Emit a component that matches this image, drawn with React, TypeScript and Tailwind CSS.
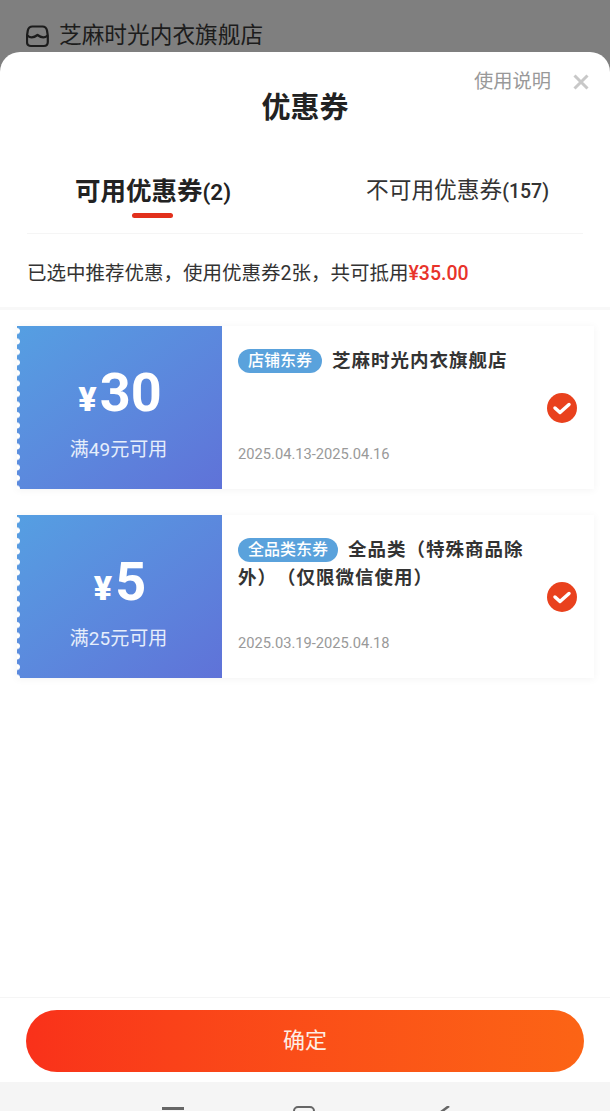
const font = "font-['Roboto','Noto_Sans_CJK_SC',sans-serif]"

function StoreIcon() {
  return (
    <svg width="23" height="23" viewBox="0 0 23 23" fill="none" stroke="#1c1c1c" strokeWidth="2.2" className="shrink-0">
      <path d="M6.500 1.500h10c2.500 0 4 1.700 4.500 4l.8 5v6.500c0 2.500-1.800 4-4 4H5c-2.200 0-4-1.500-4-4v-6.500l.8-5c.5-2.300 2-4 4.700-4z" />
      <path d="M1.500 10.500c2.500 2.500 6 2.500 10-.5 4 3 7.500 3 10 .5" />
    </svg>
  )
}

function CheckBadge() {
  return (
    <svg width="30" height="30" viewBox="0 0 30 30" className="shrink-0">
      <circle cx="15" cy="15" r="15" fill="#e9411d" />
      <path d="M8 15l5 4.500 9-8" fill="none" stroke="#fff" strokeWidth="3.500" strokeLinecap="round" strokeLinejoin="round" />
    </svg>
  )
}

interface CouponProps {
  amount: string
  limit: string
  tag: string
  title: string
  dates: string
}

function Coupon({ amount, limit, tag, title, dates }: CouponProps) {
  return (
    <div className="flex h-[163px] bg-white shadow-[0_1px_8px_rgba(0,0,0,0.05)]">
      <div className="relative flex w-[205px] shrink-0 flex-col items-center bg-gradient-to-br from-[#559fe2] to-[#5f72d8] text-white">
        <div className="absolute inset-y-0 left-0 w-[3px] bg-[radial-gradient(circle_at_0_5px,#ffffff_2.500px,transparent_3.500px)] bg-[length:3px_10.500px]" />
        <div className="flex h-[99px] items-end justify-center pb-[5px] pl-[1px]">
          <span className="mr-[3px] mb-[4px] text-[34px] leading-none font-black">¥</span>
          <span className="text-[54px] leading-none font-bold">{amount}</span>
        </div>
        <div className="mt-[12px] pr-[2px] text-[19px] leading-[26px] text-[#e6eefb]">{limit}</div>
      </div>
      <div className="flex min-w-0 flex-1 items-center pr-[17px] pl-[16px]">
        <div className="flex h-full min-w-0 flex-1 flex-col pt-[21px] pb-[25px]">
          <div className="text-[18.500px] leading-[28px] font-semibold tracking-[1px] text-[#333] [text-spacing-trim:space-all]">
            <span className="mr-[10px] inline-flex h-[24px] items-center rounded-full bg-[#5aa2dc] px-[10px] align-[1px] text-[16px] font-medium tracking-normal text-white">
              {tag}
            </span>
            {title}
          </div>
          <div className="mt-auto text-[14.700px] leading-[20px] text-[#999]">{dates}</div>
        </div>
        <CheckBadge />
      </div>
    </div>
  )
}

export default function App() {
  return (
    <div className={`${font} flex h-[1111px] w-[610px] flex-col overflow-hidden bg-[#7f7f7f]`}>
      <div className="flex h-[52px] shrink-0 items-end gap-[10px] pb-[4px] pl-[26px] text-[22.700px] leading-[32px] text-[#1c1c1c]">
        <StoreIcon />
        <span className="mb-[-4px]">芝麻时光内衣旗舰店</span>
      </div>

      <div className="flex min-h-0 flex-1 flex-col rounded-t-[20px] bg-white">
        <div className="relative h-[92px] shrink-0 pt-[38px] text-center text-[29px] leading-[36px] font-semibold text-[#222]">
          优惠券
          <div className="absolute top-[17px] right-[21px] flex items-center gap-[22px]">
            <span className="text-[19.300px] leading-[26px] font-normal text-[#999]">使用说明</span>
            <svg width="16" height="16" viewBox="0 0 16 16" stroke="#c8c8c8" strokeWidth="3" className="shrink-0">
              <path d="M1.500 1.500l13 13M14.500 1.500l-13 13" />
            </svg>
          </div>
        </div>

        <div className="mx-[27px] flex h-[90px] shrink-0 items-start border-b border-[#f5f5f5]">
          <div className="relative mt-[29px] ml-[48px] text-[25.500px] leading-[36px] font-semibold text-[#222]">
            可用优惠券<span className="text-[22.500px]">(2)</span>
            <div className="absolute top-[40px] left-[57px] h-[5px] w-[41px] rounded-full bg-[#e2301c]" />
          </div>
          <div className="mt-[31px] mr-[34px] ml-auto text-[22.700px] leading-[32px] text-[#333]">
            不可用优惠券<span className="text-[19.500px] font-medium">(157)</span>
          </div>
        </div>

        <div className="flex h-[76px] shrink-0 items-center border-b-[3px] border-[#f8f8f8] pt-[7px] pl-[27px] text-[19.500px] leading-[26px] text-[#333]">
          已选中推荐优惠，使用优惠券2张，共可抵用
          <span className="font-medium text-[#e8332a]">¥35.00</span>
        </div>

        <div className="flex flex-1 flex-col gap-[26px] pt-[16px] pr-[16px] pl-[17px]">
          <Coupon
            amount="30"
            limit="满49元可用"
            tag="店铺东券"
            title="芝麻时光内衣旗舰店"
            dates="2025.04.13-2025.04.16"
          />
          <Coupon
            amount="5"
            limit="满25元可用"
            tag="全品类东券"
            title="全品类（特殊商品除外）（仅限微信使用）"
            dates="2025.03.19-2025.04.18"
          />
        </div>

        <div className="h-[85px] shrink-0 border-t border-[#f5f5f5] px-[26px] pt-[12px]">
          <button className="h-[62px] w-full rounded-full bg-gradient-to-r from-[#f9311a] to-[#fc6415] pb-[2px] text-[22px] text-[#fdeee6]">
            确定
          </button>
        </div>
      </div>

      <div className="flex h-[29px] shrink-0 items-start bg-[#f5f5f5] pt-[24px] pl-[162px]">
        <div className="mt-[1px] h-[3px] w-[22px] bg-[#666]" />
        <div className="ml-[109px] h-[14px] w-[22px] rounded-[5px] border-[2.500px] border-[#666]" />
        <svg width="10" height="6" viewBox="0 0 10 6" fill="none" stroke="#666" strokeWidth="2.500" className="ml-[125px]">
          <path d="M9 0L1 6" />
        </svg>
      </div>
    </div>
  )
}
